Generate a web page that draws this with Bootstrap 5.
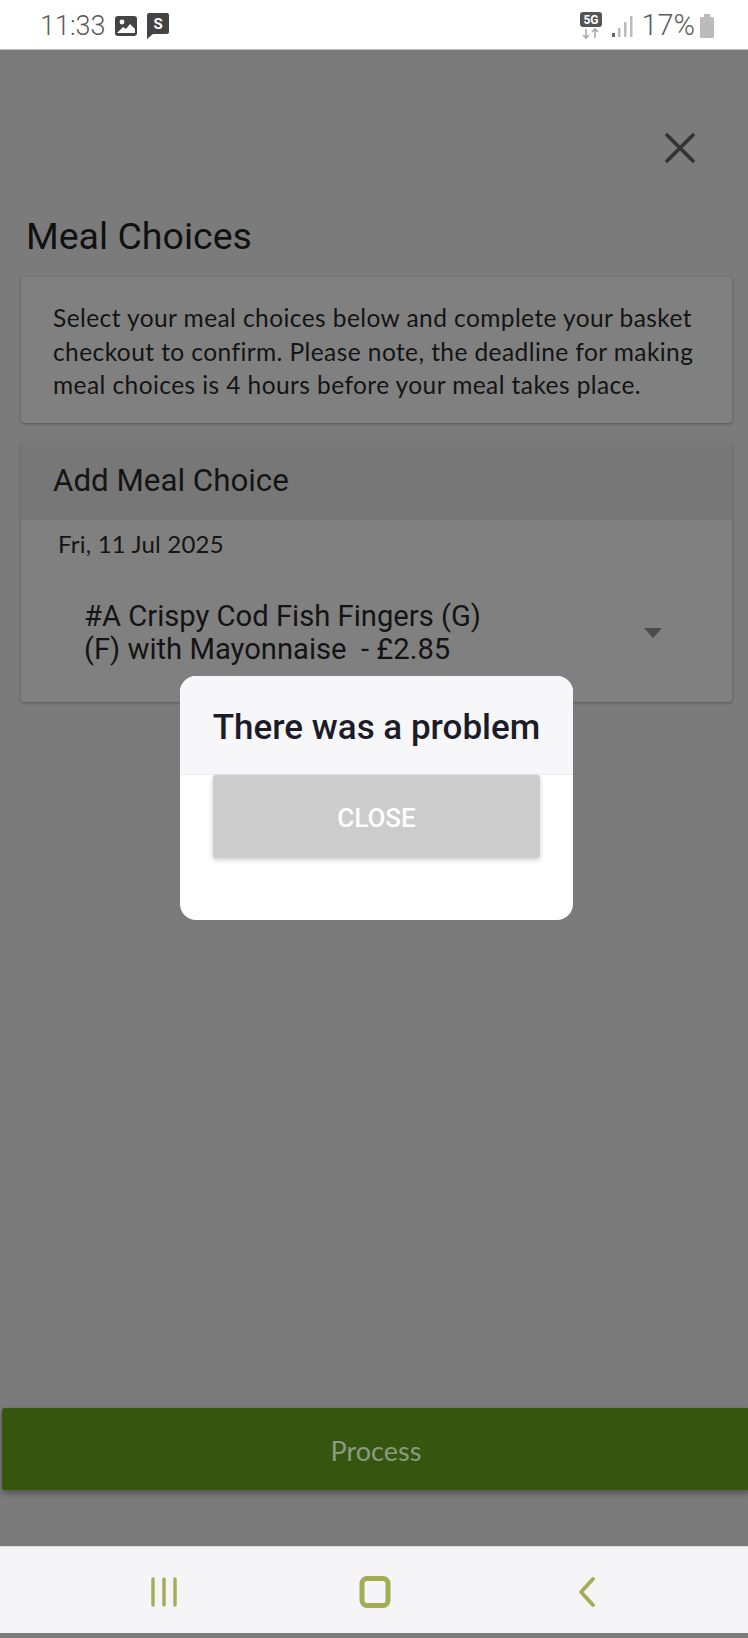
<!DOCTYPE html>
<html lang="en">
<head>
    <meta charset="UTF-8">
    <meta name="viewport" content="width=device-width, initial-scale=1.0">
    <title>Meal Choices</title>
    <link href="https://cdn.jsdelivr.net/npm/bootstrap@5.3.3/dist/css/bootstrap.min.css" rel="stylesheet">
    <style>
        html, body { height: 100%; }
        body {
            width: 748px;
            height: 1638px;
            overflow: hidden;
            position: relative;
            background: #7b7b7b;
            font-family: Lato, sans-serif;
            color: #141414;
        }
        .status-bar {
            height: 50px;
            background: #fff;
            border-bottom: 1px solid #bdbdbd;
            padding: 3px 33px 0 40px;
            font-family: Roboto, sans-serif;
            color: #5c5c5c;
            font-size: 27px;
            font-weight: 300;
        }
        .pct-text { font-size: 29px; }
        .page-main { height: 1496px; }
        .close-row { height: 138px; padding: 82px 52px 0 0; }
        .page-title {
            font-family: Roboto, sans-serif;
            font-weight: 400;
            font-size: 37.5px;
            line-height: 44px;
            margin: 26px 0 19px 26px;
            color: #111;
        }
        .sheet {
            margin: 0 16px 20px 21px;
            background: #808080;
            border: 0;
            border-radius: 3px;
            box-shadow: 0 1px 3px rgba(0, 0, 0, .3);
            color: #141414;
        }
        .intro-text {
            padding: 24px 20px 21px 32px;
            font-size: 24.5px;
            line-height: 33.5px;
            letter-spacing: .42px;
        }
        .sheet .card-header {
            height: 77px;
            background: #777;
            border: 0;
            padding: 18px 32px 0;
            font-family: Roboto, sans-serif;
            font-weight: 400;
            font-size: 31.3px;
            line-height: 40px;
        }
        .date-line {
            font-size: 24px;
            line-height: 30px;
            padding: 9px 0 0 37px;
            letter-spacing: .2px;
        }
        .meal-row { padding: 41px 70px 35px 63px; }
        .meal-name {
            width: 410px;
            font-family: Roboto, sans-serif;
            font-weight: 400;
            font-size: 29.2px;
            line-height: 33.5px;
        }
        .caret-down {
            width: 0;
            height: 0;
            border-left: 9px solid transparent;
            border-right: 9px solid transparent;
            border-top: 10px solid #4c4c4c;
        }
        .process-btn {
            width: 748px;
            height: 82px;
            margin: 0 0 56px 2px;
            padding-top: 10px;
            background: #36560f;
            border: 0;
            border-radius: 3px;
            color: #8b9a80;
            font-size: 27px;
            box-shadow: 0 3px 6px rgba(0, 0, 0, .35);
        }
        .nav-bar {
            height: 87px;
            background: #f5f5f7;
            border-top: 1px solid #ddd;
            padding: 3px 149px 0 148px;
        }
        .home-icon { margin-right: 6px; }
        .alert-box {
            position: absolute;
            left: 180px;
            top: 676px;
            width: 393px;
            height: 244px;
            background: #fff;
            border-radius: 16px;
            overflow: hidden;
        }
        .alert-head {
            height: 99px;
            padding-top: 7px;
            background: #f7f7fa;
            border-bottom: 1px solid #ececf0;
            font-family: Roboto, sans-serif;
            font-weight: 500;
            font-size: 35px;
            color: #1c1c28;
        }
        .alert-close {
            display: block;
            width: 327px;
            height: 83px;
            margin: 0 0 0 33px;
            padding-top: 10px;
            background: #ccc;
            border: 0;
            border-radius: 3px;
            color: #fff;
            font-family: Roboto, sans-serif;
            font-weight: 500;
            font-size: 26px;
            box-shadow: 0 2px 5px rgba(0, 0, 0, .2);
        }
    </style>
</head>
<body>
    <div class="status-bar d-flex align-items-center justify-content-between">
        <div class="d-flex align-items-center">
            <span>11:33</span>
            <svg class="ms-2" width="24" height="24" viewBox="0 0 24 24">
                <rect x="1" y="2" width="22" height="20" rx="3" fill="#444"/>
                <circle cx="8" cy="8" r="2.4" fill="#fff"/>
                <path d="M3 19 L9 13 L12 15 L16 10 L21 15 V19 Z" fill="#fff"/>
            </svg>
            <svg class="ms-2" width="24" height="28" viewBox="0 0 24 28">
                <path d="M3 1 H21 Q23 1 23 3 V20 Q23 22 21 22 H7 L1 27 V3 Q1 1 3 1 Z" fill="#444"/>
                <text x="12" y="17" text-anchor="middle" font-family="Roboto, sans-serif" font-weight="700" font-size="15" fill="#fff">S</text>
            </svg>
        </div>
        <div class="d-flex align-items-center">
            <svg width="24" height="28" viewBox="0 0 24 28">
                <rect x="1" y="0" width="22" height="15" rx="3" fill="#555"/>
                <text x="12" y="12" text-anchor="middle" font-family="Roboto, sans-serif" font-weight="700" font-size="12" fill="#fff">5G</text>
                <path d="M7 17 V26 M4 23 L7 26 L10 23" stroke="#aaa" stroke-width="1.6" fill="none"/>
                <path d="M16 26 V17 M13 20 L16 17 L19 20" stroke="#aaa" stroke-width="1.6" fill="none"/>
            </svg>
            <svg class="ms-2" width="22" height="24" viewBox="0 0 22 24">
                <rect x="1" y="19" width="3" height="4" fill="#666"/>
                <rect x="7" y="14" width="2.5" height="9" fill="#bbb"/>
                <rect x="13" y="8" width="2.5" height="15" fill="#bbb"/>
                <rect x="19" y="2" width="2.5" height="21" fill="#bbb"/>
            </svg>
            <span class="ms-2 pct-text">17%</span>
            <svg class="ms-1" width="16" height="26" viewBox="0 0 16 26">
                <rect x="5" y="1" width="6" height="3" fill="#bbb"/>
                <rect x="1" y="4" width="14" height="21" rx="1.5" fill="#bbb"/>
            </svg>
        </div>
    </div>

    <div class="page-main d-flex flex-column">
        <div class="close-row d-flex justify-content-end">
            <svg width="32" height="32" viewBox="0 0 32 32">
                <path d="M3 3 L29 29 M29 3 L3 29" stroke="#333" stroke-width="3.6" stroke-linecap="round"/>
            </svg>
        </div>
        <h1 class="page-title">Meal Choices</h1>

        <div class="card sheet">
            <div class="intro-text">Select your meal choices below and complete your basket checkout to confirm. Please note, the deadline for making meal choices is 4 hours before your meal takes place.</div>
        </div>

        <div class="card sheet">
            <div class="card-header">Add Meal Choice</div>
            <div class="date-line">Fri, 11 Jul 2025</div>
            <div class="meal-row d-flex align-items-center justify-content-between">
                <div class="meal-name">#A Crispy Cod Fish Fingers (G) (F) with Mayonnaise&nbsp; - £2.85</div>
                <div class="caret-down"></div>
            </div>
        </div>

        <button type="button" class="btn process-btn mt-auto">Process</button>
    </div>

    <div class="nav-bar d-flex align-items-center justify-content-between">
        <svg width="32" height="32" viewBox="0 0 32 32">
            <path d="M5 3 V29 M16 3 V29 M27 3 V29" stroke="#a3ad55" stroke-width="3.4" stroke-linecap="round"/>
        </svg>
        <svg class="home-icon" width="34" height="34" viewBox="0 0 34 34">
            <rect x="4" y="3.5" width="26" height="27" rx="5" fill="none" stroke="#a3ad55" stroke-width="5"/>
        </svg>
        <svg width="24" height="32" viewBox="0 0 24 32">
            <path d="M18 3 L6 16 L18 29" fill="none" stroke="#a3ad55" stroke-width="3.8" stroke-linecap="round" stroke-linejoin="round"/>
        </svg>
    </div>

    <div class="alert-box">
        <div class="alert-head d-flex align-items-center justify-content-center">There was a problem</div>
        <button type="button" class="btn alert-close">CLOSE</button>
    </div>

    <script src="https://cdn.jsdelivr.net/npm/bootstrap@5.3.3/dist/js/bootstrap.bundle.min.js"></script>
</body>
</html>
